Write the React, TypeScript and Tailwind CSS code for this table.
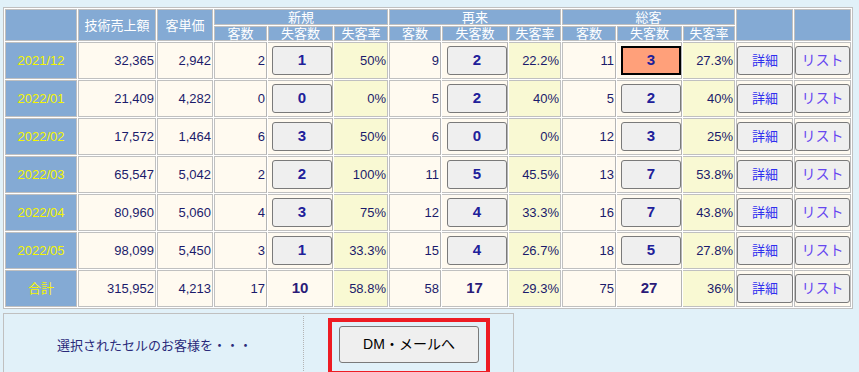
import React from "react";

type Group = { count: number; lost: number; rate: string };
type Row = { month: string; sales: string; unit: string; groups: Group[]; total?: boolean };

const rows: Row[] = [
  { month: "2021/12", sales: "32,365", unit: "2,942", groups: [{ count: 2, lost: 1, rate: "50%" }, { count: 9, lost: 2, rate: "22.2%" }, { count: 11, lost: 3, rate: "27.3%" }] },
  { month: "2022/01", sales: "21,409", unit: "4,282", groups: [{ count: 0, lost: 0, rate: "0%" }, { count: 5, lost: 2, rate: "40%" }, { count: 5, lost: 2, rate: "40%" }] },
  { month: "2022/02", sales: "17,572", unit: "1,464", groups: [{ count: 6, lost: 3, rate: "50%" }, { count: 6, lost: 0, rate: "0%" }, { count: 12, lost: 3, rate: "25%" }] },
  { month: "2022/03", sales: "65,547", unit: "5,042", groups: [{ count: 2, lost: 2, rate: "100%" }, { count: 11, lost: 5, rate: "45.5%" }, { count: 13, lost: 7, rate: "53.8%" }] },
  { month: "2022/04", sales: "80,960", unit: "5,060", groups: [{ count: 4, lost: 3, rate: "75%" }, { count: 12, lost: 4, rate: "33.3%" }, { count: 16, lost: 7, rate: "43.8%" }] },
  { month: "2022/05", sales: "98,099", unit: "5,450", groups: [{ count: 3, lost: 1, rate: "33.3%" }, { count: 15, lost: 4, rate: "26.7%" }, { count: 18, lost: 5, rate: "27.8%" }] },
  { month: "合計", sales: "315,952", unit: "4,213", groups: [{ count: 17, lost: 10, rate: "58.8%" }, { count: 58, lost: 17, rate: "29.3%" }, { count: 75, lost: 27, rate: "36%" }], total: true },
];

const widths = ["w-[72px]", "w-[78px]", "w-[56px]", "w-[53px]", "w-[65px]", "w-[54px]", "w-[52px]", "w-[66px]", "w-[52px]", "w-[54px]", "w-[65px]", "w-[52px]", "w-[57px]", "w-[57px]"];

const head = "border border-[#c0c0c0] bg-[#84aad4] text-white text-[13px] leading-[13px] text-center font-normal p-0";
const num = "border border-[#c0c0c0] text-[#1b1b6b] text-[13px] text-right pr-px p-0";

function LostButton({ value, selected }: { value: number; selected?: boolean }) {
  return (
    <button
      className={
        selected
          ? "w-[60px] h-[29px] bg-[#ffa07a] border-2 border-black text-[15px] font-bold text-[#20209a]"
          : "w-[60px] h-[29px] bg-[#efefef] border border-[#7a7a7a] rounded-[3px] text-[15px] font-bold text-[#20209a]"
      }
    >
      {value}
    </button>
  );
}

export default function App() {
  return (
    <div className="min-h-screen bg-[#e1f1f9] pt-[7px] pl-[3px] font-['Liberation_Sans','Noto_Sans_CJK_JP',sans-serif]">
      <table className="table-fixed w-[850px] border-separate border-spacing-[1px] border border-[#c0c0c0] bg-white">
        <colgroup>
          {widths.map((w, i) => (
            <col key={i} className={w} />
          ))}
        </colgroup>
        <thead>
          <tr className="h-[16px]">
            <th rowSpan={2} className={head}></th>
            <th rowSpan={2} className={head}>技術売上額</th>
            <th rowSpan={2} className={head}>客単価</th>
            <th colSpan={3} className={head}>新規</th>
            <th colSpan={3} className={head}>再来</th>
            <th colSpan={3} className={head}>総客</th>
            <th rowSpan={2} className={head}></th>
            <th rowSpan={2} className={head}></th>
          </tr>
          <tr className="h-[15px]">
            {[0, 1, 2].map((g) => (
              <React.Fragment key={g}>
                <th className={head}>客数</th>
                <th className={head}>失客数</th>
                <th className={head}>失客率</th>
              </React.Fragment>
            ))}
          </tr>
        </thead>
        <tbody>
          {rows.map((r, ri) => (
            <tr key={r.month} className="h-[37px]">
              <td className="border border-[#c0c0c0] bg-[#84aad4] text-[#f5f500] text-[13px] text-center p-0">{r.month}</td>
              <td className={`${num} bg-[#fffaf0]`}>{r.sales}</td>
              <td className={`${num} bg-[#fffaf0]`}>{r.unit}</td>
              {r.groups.map((g, gi) => (
                <React.Fragment key={gi}>
                  <td className="border border-[#c0c0c0] border-r-dotted border-r-[#b4b4b4] bg-[#fffaf0] text-[#1b1b6b] text-[13px] text-right pr-px">
                    {g.count}
                  </td>
                  <td className="border border-[#c0c0c0] border-l-0 border-r-dotted border-r-[#b4b4b4] bg-[#fffaf0] p-0 text-right">
                    {r.total ? (
                      <div className="text-center text-[15px] font-bold text-[#2a1a78]">{g.lost}</div>
                    ) : (
                      <LostButton value={g.lost} selected={ri === 0 && gi === 2} />
                    )}
                  </td>
                  <td className="border border-[#c0c0c0] border-l-0 bg-[#f9f9d3] text-[#1b1b6b] text-[13px] text-right pr-px">
                    {g.rate}
                  </td>
                </React.Fragment>
              ))}
              <td className="border border-[#c0c0c0] bg-[#fffaf0] p-0">
                <button className="w-[56px] h-[29px] bg-[#efefef] border border-[#7a7a7a] rounded-[3px] text-[13px] text-[#2f2ff0]">詳細</button>
              </td>
              <td className="border border-[#c0c0c0] bg-[#fffaf0] p-0">
                <button className="w-[55px] h-[29px] bg-[#efefef] border border-[#7a7a7a] rounded-[3px] text-[14px] text-[#6646f0]">リスト</button>
              </td>
            </tr>
          ))}
        </tbody>
      </table>

      <div className="mt-[4px] flex w-[511px] border border-[#c0c0c0] p-[2px]">
        <div className="flex w-[298px] items-center justify-center border-r border-dotted border-[#b4b4b4] text-[13px] text-[#2a2a7a]">
          選択されたセルのお客様を・・・
        </div>
        <div className="flex flex-1 justify-center pt-[2px] pl-[3px]">
          <div className="border-4 border-[#ed1c24] pt-[4px] px-[7px] pb-[8px]">
            <button className="w-[140px] h-[37px] bg-[#efefef] border border-[#7a7a7a] rounded-[3px] text-[14px] text-black">
              DM・メールへ
            </button>
          </div>
        </div>
      </div>
    </div>
  );
}
